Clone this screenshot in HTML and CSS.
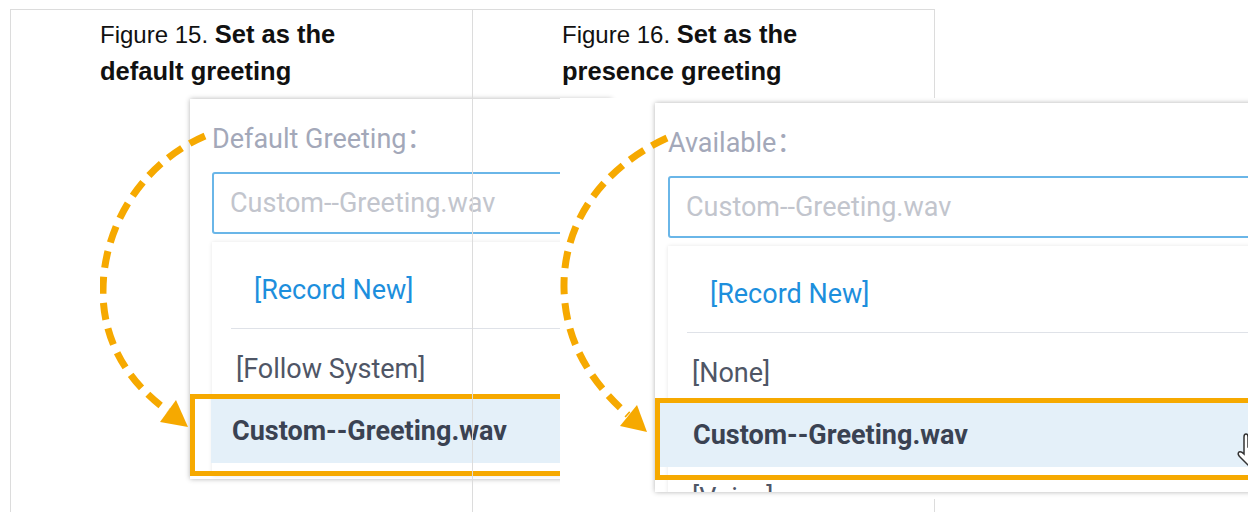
FILE: index.html
```html
<!DOCTYPE html>
<html lang="en">
<head>
    <meta charset="UTF-8">
    <meta name="viewport" content="width=device-width, initial-scale=1.0">
    <title>Greeting figures</title>
    <link rel="stylesheet" href="styles.css">
</head>
<body>

    <table class="fig-table">
        <tr>
            <!-- figure 15 -->
            <td class="fig-cell">
                <p class="fig-caption">Figure 15. <b>Set as the default greeting</b></p>
                <div class="shot">
                    <svg class="shot-arrow" width="460" height="385" viewBox="0 0 460 385">
                        <path d="M105,37 C40,65 2,130 3,195 C4,245 30,285 68,312" fill="none" stroke="#f6a900" stroke-width="7" stroke-dasharray="17 9"/>
                        <polygon points="88,328 60,323 76,301" fill="#f6a900"/>
                    </svg>
                    <div class="panel">
                        <div class="panel-label">Default Greeting：</div>
                        <div class="panel-input">Custom--Greeting.wav</div>
                        <div class="menu">
                            <div class="menu-record">[Record New]</div>
                            <div class="menu-sep"></div>
                            <div class="menu-item">[Follow System]</div>
                            <div class="menu-pick">
                                <div class="menu-current">Custom--Greeting.wav</div>
                            </div>
                        </div>
                    </div>
                </div>
            </td>

            <!-- figure 16 -->
            <td class="fig-cell fig-cell-right">
                <p class="fig-caption">Figure 16. <b>Set as the presence greeting</b></p>
                <div class="shot shot-presence">
                    <svg class="shot-arrow" width="200" height="401" viewBox="0 0 200 401">
                        <path d="M107,40 C42,70 3,125 4,190 C5,245 32,285 68,317" fill="none" stroke="#f6a900" stroke-width="7" stroke-dasharray="17 9"/>
                        <polygon points="87,334 60,328 77,307" fill="#f6a900"/>
                    </svg>
                    <div class="panel">
                        <div class="panel-label">Available：</div>
                        <div class="panel-input">Custom--Greeting.wav</div>
                        <div class="menu">
                            <div class="menu-record">[Record New]</div>
                            <div class="menu-sep"></div>
                            <div class="menu-item">[None]</div>
                            <div class="menu-pick">
                                <div class="menu-current">Custom--Greeting.wav</div>
                            </div>
                            <div class="menu-item menu-next">[Voice]</div>
                        </div>
                        <!-- mouse pointer -->
                        <svg class="pointer" width="26" height="36" viewBox="0 0 26 36">
                            <path d="M8,4 Q8,1 10,1 Q12,1 12,4 L12,14 L20,15 Q24,16 24,20 L23,30 L12,32 L4,24 Q1,21 3,19 Q5,18 8,21 Z" fill="#fff" stroke="#333" stroke-width="1.5"/>
                        </svg>
                    </div>
                </div>
            </td>
        </tr>
    </table>

</body>
</html>
```

FILE: styles.css
```css
body {
    margin: 0;
    background: #fff;
    overflow: hidden;
    font-family: "Liberation Sans", Arial, sans-serif;
}

.fig-table {
    border-collapse: collapse;
    table-layout: fixed;
    width: 924px;
    margin: 9px 0 0 10px;
}

.fig-cell {
    width: 372px;
    border: 1px solid #dcdcdc;
    padding: 6px 0 30px 89px;
    vertical-align: top;
}

/* the divider stays visible over the left picture */
.fig-cell-right {
    position: relative;
}
.fig-cell-right::before {
    content: "";
    position: absolute;
    left: -1px;
    top: 0;
    bottom: 0;
    width: 1px;
    background: #dcdcdc;
    z-index: 3;
}

.fig-caption {
    margin: 0;
    width: 290px;
    font-size: 24px;
    line-height: 36px;
    color: #111;
}
.fig-caption b {
    font-size: 25.5px;
}

.shot {
    position: relative;
    margin-top: 9px;
    width: 460px;
    height: 385px;
}
.shot-presence {
    margin-top: 8px;
    margin-left: -2px;
    padding-top: 5px;
    width: 700px;
    height: 396px;
    background: #fff;
    z-index: 1;
}

.shot-arrow {
    position: absolute;
    left: 0;
    top: 0;
    z-index: 2;
}

.panel {
    margin-left: 90px;
    width: 400px;
    padding: 25px 0 3px 22px;
    background: #fff;
    box-shadow: 0 0 5px rgba(0, 0, 0, 0.3);
    font-family: Roboto, "Noto Sans CJK SC", sans-serif;
}
.shot-presence .panel {
    position: relative;
    margin-left: 95px;
    width: 640px;
    height: 364px;
    padding: 25px 0 0 13px;
    overflow: hidden;
}

.panel-label {
    font-size: 27px;
    line-height: 30px;
    color: #a3a8b9;
}

.panel-input {
    margin-top: 18px;
    height: 58px;
    border: 2px solid #6ab6e8;
    border-radius: 3px;
    padding-left: 16px;
    font-size: 27px;
    line-height: 58px;
    color: #c2c5cd;
}

.menu {
    margin-top: 8px;
    padding-top: 15px;
    box-shadow: 0 0 4px rgba(0, 0, 0, 0.1);
    font-size: 27px;
}

.menu-record {
    padding-left: 42px;
    line-height: 66px;
    color: #1d8fdd;
}

.menu-sep {
    margin: 5px 0 0 19px;
    height: 1px;
    background: #dfe2e8;
}

.menu-item {
    padding: 25px 0 10px 24px;
    line-height: 30px;
    color: #4f5666;
}

.menu-pick {
    margin-left: -22px;
    border: 5px solid #f6a900;
    padding: 0 0 8px 16px;
}
.shot-presence .menu-pick {
    margin-left: -13px;
    padding-left: 0;
}

.menu-current {
    padding-left: 21px;
    line-height: 64px;
    background: #e4f0f9;
    font-weight: bold;
    color: #3a4252;
}
.shot-presence .menu-current {
    padding-left: 33px;
}

.menu-next {
    padding-top: 3px;
}

.pointer {
    position: absolute;
    left: 581px;
    top: 330px;
}
```
